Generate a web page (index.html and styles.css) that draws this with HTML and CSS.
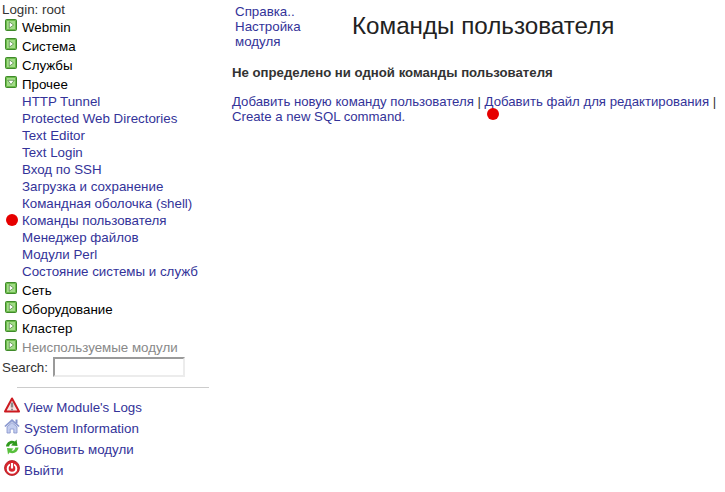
FILE: index.html
```html
<!DOCTYPE html>
<html lang="ru">
<head>
<meta charset="utf-8">
<title>Команды пользователя</title>
<link rel="stylesheet" href="styles.css">
</head>
<body>
<svg class="defs" width="0" height="0" aria-hidden="true">
  <symbol id="closed" viewBox="0 0 12 12">
    <rect x=".5" y=".5" width="11" height="11" rx="1" fill="#6dbb4c" stroke="#3f8a2a"/>
    <rect x="2" y="2" width="8" height="8" fill="#a2dc88"/>
    <path d="M4.300 2.800v6.400L8.500 6z" fill="#fff" stroke="#2f6f1e" stroke-width=".6"/>
  </symbol>
  <symbol id="open" viewBox="0 0 12 12">
    <rect x=".5" y=".5" width="11" height="11" rx="1" fill="#6dbb4c" stroke="#3f8a2a"/>
    <rect x="2" y="2" width="8" height="8" fill="#a2dc88"/>
    <path d="M2.800 4.300h6.400L6 8.500z" fill="#fff" stroke="#2f6f1e" stroke-width=".6"/>
  </symbol>
</svg>
<div class="page">
  <nav class="side">
    <div class="login">Login: root</div>
    <div class="cat"><svg class="tog"><use href="#closed"/></svg><span>Webmin</span></div>
    <div class="cat"><svg class="tog"><use href="#closed"/></svg><span>Система</span></div>
    <div class="cat"><svg class="tog"><use href="#closed"/></svg><span>Службы</span></div>
    <div class="cat"><svg class="tog"><use href="#open"/></svg><span>Прочее</span></div>
    <ul class="items">
      <li><a href="#">HTTP Tunnel</a></li>
      <li><a href="#">Protected Web Directories</a></li>
      <li><a href="#">Text Editor</a></li>
      <li><a href="#">Text Login</a></li>
      <li><a href="#">Вход по SSH</a></li>
      <li><a href="#">Загрузка и сохранение</a></li>
      <li><a href="#">Командная оболочка (shell)</a></li>
      <li><a href="#">Команды пользователя</a></li>
      <li><a href="#">Менеджер файлов</a></li>
      <li><a href="#">Модули Perl</a></li>
      <li><a href="#">Состояние системы и служб</a></li>
    </ul>
    <div class="cat"><svg class="tog"><use href="#closed"/></svg><span>Сеть</span></div>
    <div class="cat"><svg class="tog"><use href="#closed"/></svg><span>Оборудование</span></div>
    <div class="cat"><svg class="tog"><use href="#closed"/></svg><span>Кластер</span></div>
    <div class="cat muted"><svg class="tog"><use href="#closed"/></svg><span>Неиспользуемые модули</span></div>
    <div class="search"><label for="q">Search:</label><input id="q" type="text"></div>
    <hr class="rule">
    <div class="act">
      <svg class="ico" viewBox="0 0 16 16"><path d="M8 1.500 15 14.500H1z" fill="#f6e2e2" stroke="#cc1a20" stroke-width="2" stroke-linejoin="round"/><path d="M8 5.500v5" stroke="#8a8a8a" stroke-width="2.400"/><circle cx="8" cy="12.600" r="1.100" fill="#8a8a8a"/></svg>
      <a href="#">View Module's Logs</a>
    </div>
    <div class="act">
      <svg class="ico" viewBox="0 0 16 16"><path d="M.300 8 8 1l7.700 7-1.300 1L8 3.500 1.600 9z" fill="#8c9ad0"/><path d="M3 8.800 8 4.500l5 4.300V15h-3.200v-4H6.200v4H3z" fill="#c3cdee" stroke="#8593cc" stroke-width=".8"/><rect x="11.500" y="1.500" width="2" height="4" fill="#8593cc"/></svg>
      <a href="#">System Information</a>
    </div>
    <div class="act">
      <svg class="ico" viewBox="0 0 16 16"><path d="M2 7.500C2.500 3 7 .5 11 2.500L12.500.5l1 6.500L7 6.500l2-2C7 4 5.500 5 5.200 7.500z" fill="#2f9a1c"/><path d="M14.500 8.500c-.5 4.500-5 7-9 5L4 15.500 3 9l6.500.5-2 2c2 .5 3.500-.5 3.800-3z" fill="#58c03c"/></svg>
      <a href="#">Обновить модули</a>
    </div>
    <div class="act">
      <svg class="ico" viewBox="0 0 16 16"><circle cx="8" cy="8" r="7.500" fill="#d8262e" stroke="#b01820" stroke-width=".8"/><circle cx="8" cy="8.500" r="4.300" fill="none" stroke="#fff" stroke-width="2"/><path d="M8 2.500v6" stroke="#d8262e" stroke-width="4"/><path d="M8 3v5.500" stroke="#fff" stroke-width="2.200"/></svg>
      <a href="#">Выйти</a>
    </div>
  </nav>
  <main class="main">
    <header class="head">
      <div class="help"><a href="#">Справка..</a><a href="#">Настройка модуля</a></div>
      <h1 class="title">Команды пользователя</h1>
    </header>
    <p class="empty">Не определено ни одной команды пользователя</p>
    <p class="links"><a href="#">Добавить новую команду пользователя</a> | <a href="#">Добавить файл для редактирования</a> | <a href="#">Create a new SQL command.</a></p>
  </main>
</div>
<span class="dot dot-side"></span>
<span class="dot dot-main"></span>
</body>
</html>
```
FILE: styles.css
```css
html, body { margin: 0; padding: 0; background: #fff; }
body {
  font: 13.333px/15px "Liberation Sans", Arial, sans-serif;
  color: #333;
  width: 725px;
  height: 492px;
  overflow: hidden;
  position: relative;
}
a { color: #333399; text-decoration: none; }
.defs { position: absolute; }
.page { display: flex; }
.side { width: 209px; flex: none; padding-top: 2px; }
.login { padding-left: 2px; height: 15px; }
.cat {
  display: flex;
  height: 19px;
  color: #000;
  padding-left: 5px;
}
.cat span { padding: 3px 0 0 5px; }
.tog { width: 12px; height: 12px; flex: none; margin-top: 2px; }
.cat.muted { color: #888; }
.items { list-style: none; margin: 0; padding: 0 0 0 22px; }
.items li { height: 17px; line-height: 17px; }
.search {
  display: flex;
  align-items: center;
  height: 22px;
  padding-left: 2px;
}
.search label { width: 51px; }
.search input {
  width: 132px;
  height: 20px;
  box-sizing: border-box;
  border: 2px solid;
  border-color: #9a9a9a #ececec #ececec #9a9a9a;
  padding: 0;
  background: #fff;
}
.rule {
  margin: 9px 0 8px 17px;
  border: 0;
  border-top: 1px solid #ccc;
}
.act {
  display: flex;
  align-items: center;
  height: 21px;
  padding-left: 4px;
}
.act a { padding: 1px 0 0 4px; }
.ico { width: 16px; height: 16px; flex: none; margin-top: -4px; }
.main { flex: 1; min-width: 0; padding-left: 23px; }
.head { display: flex; align-items: center; height: 50px; padding-top: 1px; padding-bottom: 3px; }
.help { width: 120px; padding-left: 3px; box-sizing: border-box; flex: none; }
.help a { display: block; width: 80px; }
.title { margin: 0; font-size: 24.2px; line-height: 28px; font-weight: 400; color: #222; white-space: nowrap; }
.empty { margin: 11px 0 0; font-weight: 700; font-size: 13.2px; }
.links { margin: 14px 0 0; font-size: 13.2px; }
.dot {
  position: absolute;
  width: 12px;
  height: 12px;
  border-radius: 50%;
  background: #e60000;
}
.dot-side { left: 6px; top: 214px; }
.dot-main { left: 487px; top: 108px; }
```
